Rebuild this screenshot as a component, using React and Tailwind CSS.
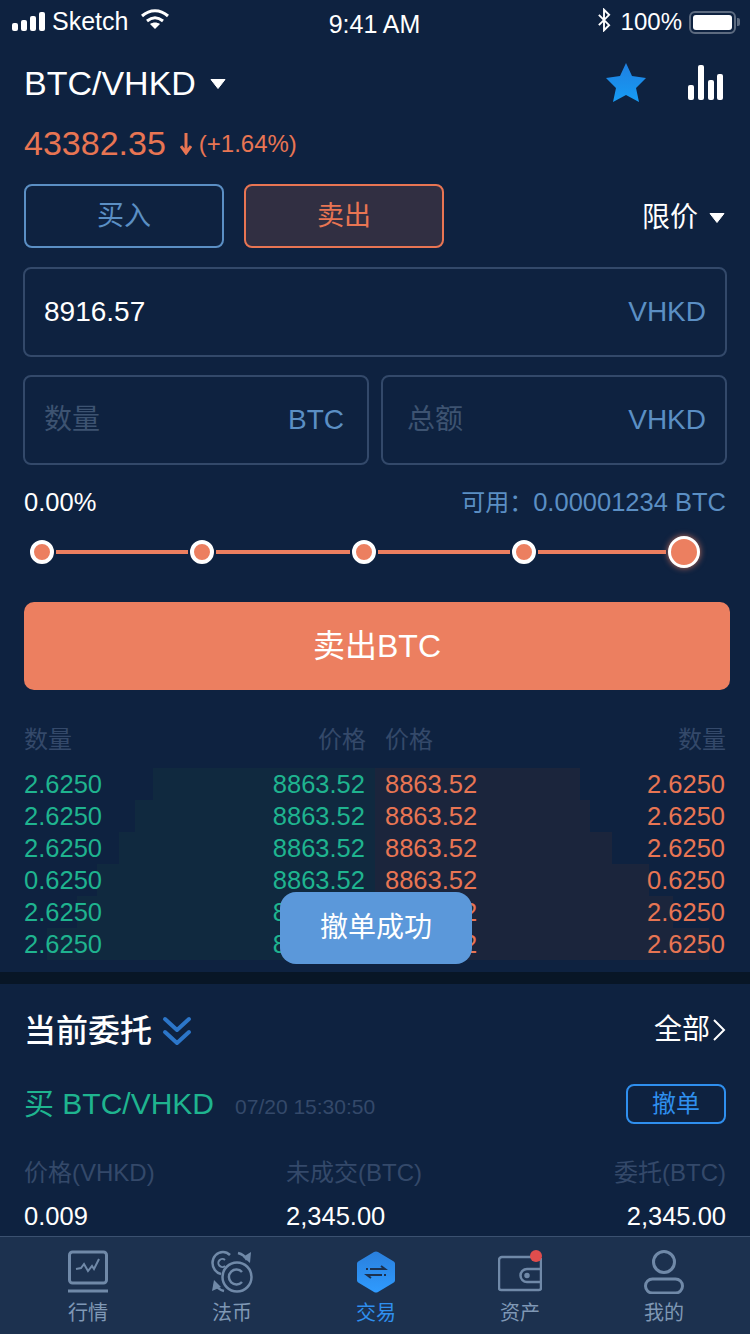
import React from 'react';

const asks = [
  { qty: '2.6250', price: '8863.52', w: 222 },
  { qty: '2.6250', price: '8863.52', w: 240 },
  { qty: '2.6250', price: '8863.52', w: 256 },
  { qty: '0.6250', price: '8863.52', w: 278 },
  { qty: '2.6250', price: '8863.52', w: 298 },
  { qty: '2.6250', price: '8863.52', w: 328 },
];
const bids = [
  { qty: '2.6250', price: '8863.52', w: 205 },
  { qty: '2.6250', price: '8863.52', w: 215 },
  { qty: '2.6250', price: '8863.52', w: 237 },
  { qty: '0.6250', price: '8863.52', w: 274 },
  { qty: '2.6250', price: '8863.52', w: 298 },
  { qty: '2.6250', price: '8863.52', w: 334 },
];

const Caret = ({ className }) => (
  <svg className={className} width="18" height="12" viewBox="0 0 18 12">
    <path d="M2 1.5h14L9 10.5z" fill="#fff" stroke="#fff" strokeLinejoin="round" />
  </svg>
);

const StatusBar = () => (
  <div className="flex h-[40px] items-center justify-between pt-[4px] pl-[12px] pr-[10px] text-[25px] text-white">
    <div className="flex w-[250px] items-center">
      <svg width="34" height="20" viewBox="0 0 34 20" fill="#fff">
        <rect x="0" y="11" width="6" height="8" rx="2" />
        <rect x="9" y="8" width="6" height="11" rx="2" />
        <rect x="18" y="4" width="6" height="15" rx="2" />
        <rect x="27" y="0" width="6" height="19" rx="2" />
      </svg>
      <span className="ml-[6px]">Sketch</span>
      <svg className="ml-[12px] -mt-[6px]" width="30" height="22" viewBox="0 0 30 22" fill="none" stroke="#fff" strokeWidth="3">
        <path d="M2 8c8-7 18-7 26 0" />
        <path d="M7 13c5-4 11-4 16 0" />
        <path d="M15 21l-5-5c3-2 7-2 10 0z" fill="#fff" stroke="none" />
      </svg>
    </div>
    <span className="mt-[6px] -ml-[3px]">9:41 AM</span>
    <div className="flex w-[250px] items-center justify-end">
      <svg className="-mt-[4px]" width="14" height="24" viewBox="0 0 16 28" fill="none" stroke="#fff" strokeWidth="2.2">
        <path d="M2 8l12 12-6 6V2l6 6L2 20" />
      </svg>
      <span className="ml-[10px] text-[24px]">100%</span>
      <div className="ml-[7px] flex h-[23px] w-[47px] items-center rounded-[6px] border-2 border-[#5d6b80] p-[2px]">
        <div className="h-full w-full rounded-[3px] bg-white" />
      </div>
      <div className="ml-[1px] h-[8px] w-[3px] rounded-r-[2px] bg-[#5d6b80]" />
    </div>
  </div>
);

const SliderDot = ({ big }) => (
  <div
    className={
      big
        ? 'h-[32px] w-[32px] shrink-0 rounded-full border-[3px] border-white bg-[#ec7f60] shadow-[0_0_6px_rgba(236,127,96,0.8)]'
        : 'h-[24px] w-[24px] shrink-0 rounded-full border-[4px] border-white bg-[#ec7f60]'
    }
  />
);

const Field = ({ label, unit, white, className }) => (
  <div className={`flex h-[90px] items-center justify-between rounded-[8px] border-2 border-[#33496a] px-[19px] text-[28px] ${className}`}>
    <span className={white ? 'text-white' : 'text-[#3d5371]'}>{label}</span>
    <span className="text-[#5b8fc4]">{unit}</span>
  </div>
);

const OrderBook = () => (
  <div className="relative mt-[30px]">
    <div className="grid h-[40px] grid-cols-2 items-center text-[24px] text-[#34496a]">
      <div className="flex justify-between pl-[24px] pr-[9px]">
        <span>数量</span>
        <span>价格</span>
      </div>
      <div className="flex justify-between pl-[10px] pr-[24px]">
        <span>价格</span>
        <span>数量</span>
      </div>
    </div>
    <div className="mt-[8px] grid grid-cols-2 text-[25.5px]">
      <div>
        {asks.map((r, i) => (
          <div key={i} className="relative flex h-[32px] items-center justify-between pl-[24px] pr-[10px] text-[#1fb48f]">
            <div className="absolute top-0 right-0 h-full bg-[#10293f]" style={{ width: r.w }} />
            <span className="relative">{r.qty}</span>
            <span className="relative">{r.price}</span>
          </div>
        ))}
      </div>
      <div>
        {bids.map((r, i) => (
          <div key={i} className="relative flex h-[32px] items-center justify-between pl-[10px] pr-[25px] text-[#e87553]">
            <div className="absolute top-0 left-0 h-full bg-[#1b253c]" style={{ width: r.w }} />
            <span className="relative">{r.price}</span>
            <span className="relative">{r.qty}</span>
          </div>
        ))}
      </div>
    </div>
    {/* toast */}
    <div className="absolute top-[172px] left-[280px] flex h-[72px] w-[192px] items-center justify-center rounded-[16px] bg-[#5b98da] text-[28px] text-white">
      撤单成功
    </div>
  </div>
);

const Orders = () => (
  <div className="px-[24px]">
    <div className="mt-[23px] flex items-center justify-between">
      <div className="flex items-center">
        <span className="text-[32px] font-medium text-white">当前委托</span>
        <svg className="ml-[10px]" width="30" height="30" viewBox="0 0 30 30" fill="none" stroke="#2c76c9" strokeWidth="4" strokeLinecap="round" strokeLinejoin="round">
          <path d="M3 3l12 11L27 3" />
          <path d="M3 16l12 11 12-11" />
        </svg>
      </div>
      <div className="-mt-[2px] flex items-center text-[28px] text-white">
        <span>全部</span>
        <svg className="ml-[2px]" width="14" height="24" viewBox="0 0 14 24" fill="none" stroke="#fff" strokeWidth="2">
          <path d="M2 2l10 10L2 22" />
        </svg>
      </div>
    </div>
    <div className="mt-[26px] flex items-center justify-between">
      <div className="flex items-center">
        <span className="text-[30px] text-[#1fb48f]">买 BTC/VHKD</span>
        <span className="ml-[21px] mt-[6px] text-[21px] text-[#34496a]">07/20 15:30:50</span>
      </div>
      <div className="flex h-[40px] w-[100px] items-center justify-center rounded-[8px] border-2 border-[#2f8fee] text-[24px] text-[#2f8fee]">
        撤单
      </div>
    </div>
    <div className="mt-[29px] grid grid-cols-[262px_1fr_auto] text-[24px] text-[#34496a]">
      <span>价格(VHKD)</span>
      <span>未成交(BTC)</span>
      <span>委托(BTC)</span>
    </div>
    <div className="mt-[6px] grid grid-cols-[262px_1fr_auto] text-[25.5px] text-white">
      <span>0.009</span>
      <span>2,345.00</span>
      <span>2,345.00</span>
    </div>
  </div>
);

const NavItem = ({ label, active, children }) => (
  <div className="flex w-[144px] flex-col items-center">
    <div className="flex h-[44px] items-center justify-center">{children}</div>
    <span className={`mt-[5px] text-[20px] leading-[28px] ${active ? 'text-[#2f8fee]' : 'text-[#7f98b5]'}`}>{label}</span>
  </div>
);

const BottomNav = () => (
  <div className="flex h-[98px] shrink-0 justify-center border-t border-[#3b5170] bg-[#1c314f] pt-[13px] pl-[2px]">
    <NavItem label="行情">
      <svg width="40" height="44" viewBox="0 0 40 44" fill="none" stroke="#7089a8" strokeWidth="3">
        <rect x="1.5" y="2" width="37" height="31" rx="3" />
        <path d="M0 41h40" />
        <path d="M8 19l5-1 3-4 4 7 4-5 2 3 5-10" strokeWidth="2" />
      </svg>
    </NavItem>
    <NavItem label="法币">
      <svg width="42" height="44" viewBox="0 0 42 44" fill="none" stroke="#7089a8" strokeWidth="2.5">
        <path d="M10 24C5 23 1.5 18 1.5 13 1.5 7 6 2 12 2c3 0 5 1 7 3" />
        <path d="M14 10a4 4 0 1 0 0 6" strokeWidth="2" />
        <circle cx="26" cy="27" r="14.5" />
        <path d="M31 22a7.5 7.5 0 1 0 0 10" />
        <path d="M27 3c4 1 7 3 9 7" />
        <path d="M40 2l-1 11-7-6z" fill="#7089a8" stroke="none" />
        <path d="M13 41c-4-1-7-3-9-7" />
        <path d="M1 41l2-11 7 7z" fill="#7089a8" stroke="none" />
      </svg>
    </NavItem>
    <NavItem label="交易" active>
      <svg width="38" height="44" viewBox="0 0 38 44" fill="none">
        <defs>
          <linearGradient id="hexFill" x1="0" y1="0" x2="0" y2="1">
            <stop offset="0" stopColor="#2a7fdc" />
            <stop offset="1" stopColor="#2f9bff" />
          </linearGradient>
        </defs>
        <path d="M17 2a4 4 0 0 1 4 0l15 9a3 3 0 0 1 2 3v16a3 3 0 0 1-2 3l-15 9a4 4 0 0 1-4 0L2 33a3 3 0 0 1-2-3V14a3 3 0 0 1 2-3z" fill="url(#hexFill)" />
        <path d="M9 19h2M13 19h15l-4-3" stroke="#1c314f" strokeWidth="2" />
        <path d="M29 25h-2M25 25H10l4 3" stroke="#1c314f" strokeWidth="2" />
      </svg>
    </NavItem>
    <NavItem label="资产">
      <svg width="44" height="44" viewBox="0 0 44 44" fill="none" stroke="#7089a8" strokeWidth="2.5">
        <path d="M36 7H4a3 3 0 0 0-3 3v28a2 2 0 0 0 2 2h38a2 2 0 0 0 2-2V8" />
        <path d="M43 19H29a6 6 0 0 0 0 13h14" />
        <circle cx="29" cy="25.500" r="1.500" fill="#7089a8" />
        <circle cx="38" cy="6" r="6" fill="#e04d4d" stroke="none" />
      </svg>
    </NavItem>
    <NavItem label="我的">
      <svg width="40" height="44" viewBox="0 0 40 44" fill="none" stroke="#7089a8" strokeWidth="3">
        <circle cx="20" cy="12" r="10.500" />
        <rect x="1.500" y="29" width="37" height="14" rx="7" />
      </svg>
    </NavItem>
  </div>
);

export default function App() {
  return (
    <div
      className="flex h-[1334px] w-[750px] flex-col overflow-hidden bg-[#0e2240]"
      style={{ fontFamily: '"Liberation Sans", "Noto Sans CJK SC", sans-serif' }}
    >
      <div className="min-h-0 flex-1 overflow-hidden">
        <StatusBar />

        {/* Header */}
        <div className="mt-[18px] flex items-center justify-between pl-[24px] pr-[26px]">
          <div className="flex items-center">
            <span className="text-[34px] text-white">BTC/VHKD</span>
            <Caret className="ml-[13px]" />
          </div>
          <div className="-mt-[2px] flex items-center">
            <svg className="-mt-[2px]" width="40" height="40" viewBox="0 0 40 40">
              <defs>
                <linearGradient id="starFill" x1="0" y1="0" x2="0" y2="1">
                  <stop offset="0" stopColor="#1f7fe0" />
                  <stop offset="1" stopColor="#169cf5" />
                </linearGradient>
              </defs>
              <path d="M20 1l6 13 14 2-10 10 3 14-13-7-13 7 3-14L0 16l14-2z" fill="url(#starFill)" />
            </svg>
            <svg className="ml-[42px]" width="36" height="36" viewBox="0 0 36 36" fill="#fff">
              <rect x="0" y="20" width="6" height="15" rx="2" />
              <rect x="10" y="0" width="6" height="35" rx="2" />
              <rect x="20" y="15" width="6" height="20" rx="2" />
              <rect x="29" y="9" width="6" height="26" rx="2" />
            </svg>
          </div>
        </div>

        {/* Price */}
        <div className="mt-[9px] flex items-center pl-[24px] text-[#e87553]">
          <span className="text-[34px]">43382.35</span>
          <svg className="ml-[14px]" width="12" height="22" viewBox="0 0 12 22" fill="none" stroke="#e87553" strokeWidth="3">
            <path d="M6 0v18M1 13l5 7 5-7" />
          </svg>
          <span className="ml-[7px] text-[24px]">(+1.64%)</span>
        </div>

        {/* Buy / sell tabs */}
        <div className="mt-[15px] flex items-center pl-[24px] pr-[24px]">
          <div className="flex h-[64px] w-[200px] items-center justify-center rounded-[8px] border-2 border-[#5b8fc4] text-[27px] text-[#5b8fc4]">
            买入
          </div>
          <div className="ml-[20px] flex h-[64px] w-[200px] items-center justify-center rounded-[8px] border-2 border-[#e87553] bg-[#312f42] text-[27px] text-[#e87553]">
            卖出
          </div>
          <div className="ml-auto mt-[4px] flex items-center text-[28px] text-white">
            <span>限价</span>
            <Caret className="ml-[10px]" />
          </div>
        </div>

        {/* Inputs */}
        <div className="mt-[19px] px-[23px]">
          <Field label="8916.57" unit="VHKD" white />
          <div className="mt-[18px] grid grid-cols-[346px_346px] gap-[12px]">
            <Field label="数量" unit="BTC" className="pr-[23px]" />
            <Field label="总额" unit="VHKD" className="pl-[24px]" />
          </div>
        </div>

        {/* Slider */}
        <div className="mt-[18px] flex items-center justify-between px-[24px] text-[25.5px]">
          <span className="text-white">0.00%</span>
          <span className="text-[#5b8fc4]">
            <span className="text-[24px]">可用：</span>0.00001234 BTC
          </span>
        </div>
        <div className="mt-[13px] flex h-[36px] items-center gap-[2px] pl-[30px]">
          <SliderDot />
          <div className="h-[4px] w-[132px] bg-[#ec7f60]" />
          <SliderDot />
          <div className="h-[4px] w-[134px] bg-[#ec7f60]" />
          <SliderDot />
          <div className="h-[4px] w-[132px] bg-[#ec7f60]" />
          <SliderDot />
          <div className="h-[4px] w-[128px] bg-[#ec7f60]" />
          <SliderDot big />
        </div>

        <div className="ml-[24px] mr-[20px] mt-[32px] flex h-[88px] items-center justify-center rounded-[10px] bg-[#ec7f60] text-[32px] text-white">
          卖出BTC
        </div>

        <OrderBook />

        <div className="mt-[12px] h-[12px] bg-[#081626]" />

        <Orders />
      </div>
      <BottomNav />
    </div>
  );
}
